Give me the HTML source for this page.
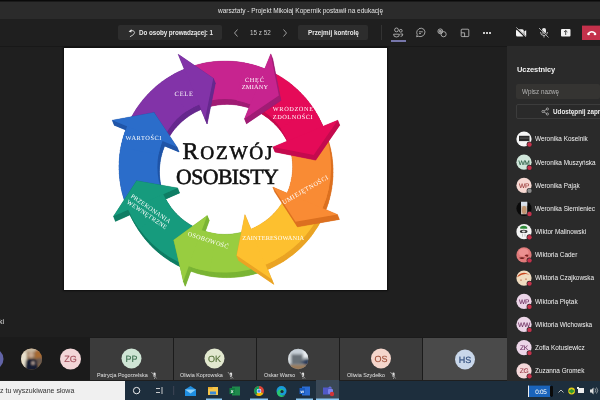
<!DOCTYPE html>
<html><head><meta charset="utf-8">
<style>
*{margin:0;padding:0;box-sizing:border-box}
html,body{width:600px;height:400px;overflow:hidden;background:#1f1f1f;font-family:"Liberation Sans",sans-serif;color:#fff}
.abs{position:absolute}
svg.abs{will-change:transform;text-rendering:geometricPrecision}
#topline{left:0;top:0;width:600px;height:1px;background:#0a0a0a}
#titlebar{left:0;top:1px;width:600px;height:17.5px;background:#2b2b2b;border-top:1px solid #1a1a1a}
#title{left:217.5px;top:7px;font-size:6.5px;color:#e4e4e4;white-space:nowrap}
#toolbar{left:0;top:18.5px;width:600px;height:27.5px;background:#1f1f1f}
#tbline{left:0;top:46px;width:507px;height:1px;background:#181818}
.btn{background:#2d2d2d;border-radius:2px}
.t{white-space:nowrap;will-change:transform}
#panel{left:507px;top:45.5px;width:93px;height:335px;background:#2a2a2a}
#strip{left:0;top:337px;width:507px;height:43px;background:#1b1b1b}
.tile{top:338px;height:42px;background:#393939}
.av{border-radius:50%;display:flex;align-items:center;justify-content:center;font-weight:bold}
#taskbar{left:0;top:380.5px;width:600px;height:19.5px;background:#1d2e3d}
</style></head><body>
<div class="abs" id="topline"></div>
<div class="abs" id="titlebar"></div>
<div class="abs t" id="title">warsztaty - Projekt Mikołaj Kopernik postawił na edukację</div>
<div class="abs" id="toolbar"></div>
<div class="abs" id="tbline"></div>

<!-- toolbar buttons -->
<div class="abs btn" style="left:118px;top:25px;width:104px;height:15px"></div>
<div class="abs t" style="left:139.3px;top:28.8px;font-size:6.3px;font-weight:bold;color:#e8e8e8;letter-spacing:-0.07px">Do osoby prowadzącej: 1</div>
<svg class="abs" style="left:126px;top:27px" width="11" height="11" viewBox="0 0 11 11"><path d="M5 3.4 Q8.6 3.2 8.6 5.6 Q8.6 7.6 4.3 9.6" stroke="#d8d8d8" stroke-width="0.9" fill="none" stroke-linecap="round"/><path d="M2.6 4.4 L5.6 2.2 L5.4 5.4 Z" fill="#e8e8e8"/></svg>
<svg class="abs" style="left:232px;top:28px" width="8" height="10" viewBox="0 0 8 10"><path d="M5.5 1.5 L2.5 5 L5.5 8.5" stroke="#bbb" stroke-width="0.8" fill="none"/></svg>
<div class="abs t" style="left:250px;top:29px;font-size:6.3px;color:#c8c8c8">15 z 52</div>
<svg class="abs" style="left:281px;top:28px" width="8" height="10" viewBox="0 0 8 10"><path d="M2.5 1.5 L5.5 5 L2.5 8.5" stroke="#bbb" stroke-width="0.8" fill="none"/></svg>
<div class="abs btn" style="left:298px;top:25px;width:70px;height:15px"></div>
<div class="abs t" style="left:307.7px;top:28.8px;font-size:6.3px;font-weight:bold;color:#e8e8e8">Przejmij kontrolę</div>
<div class="abs" style="left:381px;top:25px;width:1px;height:15px;background:#333"></div>

<!-- toolbar icons -->
<svg class="abs" style="left:385px;top:24px" width="120" height="20" viewBox="385 24 120 20">
 <g stroke="#c4c4c4" stroke-width="0.8" fill="none">
  <circle cx="396.5" cy="29.9" r="1.9"/><path d="M393.6 34.2 H399.4 Q399.6 37 396.5 37 Q393.4 37 393.6 34.2 Z"/>
  <circle cx="400.8" cy="30.8" r="1.4"/><path d="M400.4 34 H402.8 Q403 36.4 400.6 36.4"/>
  <path d="M416.6 36.8 L417.2 34.6 Q416.2 32.5 417.2 30.6 Q418.8 28 421.3 28.2 Q424.6 28.6 425 31.8 Q425.2 35 422 36.3 Q419.8 37 418.2 36.2 Z"/>
  <path d="M419 31.8 H422.8 M419 33.6 H421"/>
  <circle cx="440.3" cy="31.3" r="2.4"/><circle cx="443.6" cy="34.2" r="2.6"/>
  <rect x="461.2" y="29.2" width="7.6" height="7.4" rx="0.8"/><path d="M461.2 32.8 H464.6 V36.6"/>
 </g>
 <circle cx="440.3" cy="31.3" r="1.6" fill="#999"/>
 <rect x="391" y="40" width="15" height="2" fill="#7676aa"/>
 <g fill="#c8c8c8"><rect x="483" y="32" width="2" height="2"/><rect x="486" y="32" width="2" height="2"/><rect x="489" y="32" width="2" height="2"/></g>
</svg>
<svg class="abs" style="left:510px;top:22px" width="90" height="20" viewBox="510 22 90 20">
 <g fill="#f4f4f4">
  <rect x="516" y="29.2" width="7.8" height="7.4" rx="1.6"/>
  <path d="M524.3 31.2 L526.2 30.2 L526.2 36.4 L524.3 35.2 Z"/>
 </g>
 <path d="M515.8 27.6 L526.2 37.6" stroke="#1f1f1f" stroke-width="1.9"/>
 <path d="M516.3 27.4 L526 36.8" stroke="#e8e8e8" stroke-width="0.7"/>
 <g fill="#e8e8e8"><rect x="542" y="28" width="4" height="6" rx="2"/></g>
 <path d="M540.5 32 Q540.5 35.5 544 35.5 Q547.5 35.5 547.5 32 M544 35.5 V37.5" stroke="#ddd" stroke-width="0.8" fill="none"/>
 <path d="M539 28 L548.5 37.5" stroke="#1f1f1f" stroke-width="1.4"/>
 <path d="M539 28 L548.5 37.5" stroke="#ddd" stroke-width="0.7"/>
 <rect x="561" y="29" width="9.5" height="7.5" rx="1" fill="#f2f2f2"/>
 <path d="M565.7 35 V30.5 M564 32 L565.7 30.5 L567.4 32" stroke="#222" stroke-width="0.8" fill="none"/>
 <rect x="582" y="25.6" width="18" height="14.4" fill="#c4314b"/>
 <path d="M588.2 33.6 Q591.8 29.8 595.4 33.6" stroke="#fff" stroke-width="1.5" fill="none" stroke-linecap="round"/><ellipse cx="588.6" cy="34.2" rx="1.3" ry="1" fill="#fff"/><ellipse cx="595" cy="34.2" rx="1.3" ry="1" fill="#fff"/>
</svg>

<!-- slide -->
<div class="abs" style="left:64px;top:48px;width:323px;height:242px;background:#fff;box-shadow:0 0 1.5px 1px rgba(0,0,0,0.55)"></div>
<svg class="abs" style="left:64px;top:48px" width="323" height="242" viewBox="64 48 323 242">
<g fill="#66288e" stroke="#66288e" stroke-width="0.3"><path d="M129.3 130.8 L130.8 127.3 L132.5 123.9 L134.3 120.6 L136.2 117.3 L138.2 114.1 L140.3 110.9 L142.5 107.9 L144.9 104.9 L147.4 102.0 L149.9 99.2 L152.6 96.5 L155.3 93.9 L158.2 91.3 L161.1 88.9 L164.1 86.6 L167.2 84.4 L170.4 82.4 L173.7 80.4 L177.0 78.5 L180.4 76.8 L183.8 75.2 L187.3 73.7 L201.7 109.2 L199.4 110.2 L197.3 111.2 L195.1 112.3 L193.0 113.5 L190.9 114.8 L188.9 116.1 L186.9 117.5 L185.0 119.0 L183.1 120.5 L181.3 122.1 L179.5 123.8 L177.8 125.5 L176.2 127.3 L174.6 129.1 L173.1 131.0 L171.7 133.0 L170.4 135.0 L169.1 137.0 L167.9 139.1 L166.7 141.3 L165.7 143.4 L164.7 145.7 Z"/><path d="M127.3 125.8 L128.8 122.3 L130.8 127.3 L129.3 130.8 Z"/><path d="M128.8 122.3 L130.5 118.9 L132.5 123.9 L130.8 127.3 Z"/><path d="M130.5 118.9 L132.3 115.6 L134.3 120.6 L132.5 123.9 Z"/><path d="M132.3 115.6 L134.2 112.3 L136.2 117.3 L134.3 120.6 Z"/><path d="M134.2 112.3 L136.2 109.1 L138.2 114.1 L136.2 117.3 Z"/><path d="M136.2 109.1 L138.3 105.9 L140.3 110.9 L138.2 114.1 Z"/><path d="M138.3 105.9 L140.5 102.9 L142.5 107.9 L140.3 110.9 Z"/><path d="M140.5 102.9 L142.9 99.9 L144.9 104.9 L142.5 107.9 Z"/><path d="M142.9 99.9 L145.4 97.0 L147.4 102.0 L144.9 104.9 Z"/><path d="M145.4 97.0 L147.9 94.2 L149.9 99.2 L147.4 102.0 Z"/><path d="M147.9 94.2 L150.6 91.5 L152.6 96.5 L149.9 99.2 Z"/><path d="M150.6 91.5 L153.3 88.9 L155.3 93.9 L152.6 96.5 Z"/><path d="M153.3 88.9 L156.2 86.3 L158.2 91.3 L155.3 93.9 Z"/><path d="M156.2 86.3 L159.1 83.9 L161.1 88.9 L158.2 91.3 Z"/><path d="M159.1 83.9 L162.1 81.6 L164.1 86.6 L161.1 88.9 Z"/><path d="M162.1 81.6 L165.2 79.4 L167.2 84.4 L164.1 86.6 Z"/><path d="M165.2 79.4 L168.4 77.4 L170.4 82.4 L167.2 84.4 Z"/><path d="M168.4 77.4 L171.7 75.4 L173.7 80.4 L170.4 82.4 Z"/><path d="M171.7 75.4 L175.0 73.5 L177.0 78.5 L173.7 80.4 Z"/><path d="M175.0 73.5 L178.4 71.8 L180.4 76.8 L177.0 78.5 Z"/><path d="M178.4 71.8 L181.8 70.2 L183.8 75.2 L180.4 76.8 Z"/><path d="M181.8 70.2 L185.3 68.7 L187.3 73.7 L183.8 75.2 Z"/><path d="M185.3 68.7 L199.7 104.2 L201.7 109.2 L187.3 73.7 Z"/><path d="M199.7 104.2 L197.4 105.2 L199.4 110.2 L201.7 109.2 Z"/><path d="M197.4 105.2 L195.3 106.2 L197.3 111.2 L199.4 110.2 Z"/><path d="M195.3 106.2 L193.1 107.3 L195.1 112.3 L197.3 111.2 Z"/><path d="M193.1 107.3 L191.0 108.5 L193.0 113.5 L195.1 112.3 Z"/><path d="M191.0 108.5 L188.9 109.8 L190.9 114.8 L193.0 113.5 Z"/><path d="M188.9 109.8 L186.9 111.1 L188.9 116.1 L190.9 114.8 Z"/><path d="M186.9 111.1 L184.9 112.5 L186.9 117.5 L188.9 116.1 Z"/><path d="M184.9 112.5 L183.0 114.0 L185.0 119.0 L186.9 117.5 Z"/><path d="M183.0 114.0 L181.1 115.5 L183.1 120.5 L185.0 119.0 Z"/><path d="M181.1 115.5 L179.3 117.1 L181.3 122.1 L183.1 120.5 Z"/><path d="M179.3 117.1 L177.5 118.8 L179.5 123.8 L181.3 122.1 Z"/><path d="M177.5 118.8 L175.8 120.5 L177.8 125.5 L179.5 123.8 Z"/><path d="M175.8 120.5 L174.2 122.3 L176.2 127.3 L177.8 125.5 Z"/><path d="M174.2 122.3 L172.6 124.1 L174.6 129.1 L176.2 127.3 Z"/><path d="M172.6 124.1 L171.1 126.0 L173.1 131.0 L174.6 129.1 Z"/><path d="M171.1 126.0 L169.7 128.0 L171.7 133.0 L173.1 131.0 Z"/><path d="M169.7 128.0 L168.4 130.0 L170.4 135.0 L171.7 133.0 Z"/><path d="M168.4 130.0 L167.1 132.0 L169.1 137.0 L170.4 135.0 Z"/><path d="M167.1 132.0 L165.9 134.1 L167.9 139.1 L169.1 137.0 Z"/><path d="M165.9 134.1 L164.7 136.3 L166.7 141.3 L167.9 139.1 Z"/><path d="M164.7 136.3 L163.7 138.4 L165.7 143.4 L166.7 141.3 Z"/><path d="M163.7 138.4 L162.7 140.7 L164.7 145.7 L165.7 143.4 Z"/><path d="M162.7 140.7 L127.3 125.8 L129.3 130.8 L164.7 145.7 Z"/></g>
<g fill="#a01c74" stroke="#a01c74" stroke-width="0.3"><path d="M186.9 73.9 L190.5 72.5 L194.0 71.3 L197.6 70.2 L201.2 69.2 L204.9 68.3 L208.6 67.6 L212.3 67.0 L216.0 66.6 L219.8 66.3 L223.5 66.1 L227.3 66.0 L231.0 66.1 L234.8 66.3 L238.5 66.6 L242.3 67.1 L246.0 67.7 L249.7 68.5 L253.3 69.3 L256.9 70.3 L260.5 71.4 L264.1 72.7 L267.6 74.1 L252.9 109.5 L250.6 108.6 L248.4 107.8 L246.1 107.1 L243.8 106.4 L241.4 105.9 L239.1 105.4 L236.7 105.0 L234.4 104.7 L232.0 104.5 L229.6 104.4 L227.2 104.3 L224.8 104.4 L222.4 104.5 L220.0 104.7 L217.6 105.0 L215.3 105.4 L212.9 105.8 L210.6 106.4 L208.2 107.0 L206.0 107.7 L203.7 108.5 L201.5 109.3 Z"/><path d="M184.9 68.9 L188.5 67.5 L190.5 72.5 L186.9 73.9 Z"/><path d="M188.5 67.5 L192.0 66.3 L194.0 71.3 L190.5 72.5 Z"/><path d="M192.0 66.3 L195.6 65.2 L197.6 70.2 L194.0 71.3 Z"/><path d="M195.6 65.2 L199.2 64.2 L201.2 69.2 L197.6 70.2 Z"/><path d="M199.2 64.2 L202.9 63.3 L204.9 68.3 L201.2 69.2 Z"/><path d="M202.9 63.3 L206.6 62.6 L208.6 67.6 L204.9 68.3 Z"/><path d="M206.6 62.6 L210.3 62.0 L212.3 67.0 L208.6 67.6 Z"/><path d="M210.3 62.0 L214.0 61.6 L216.0 66.6 L212.3 67.0 Z"/><path d="M214.0 61.6 L217.8 61.3 L219.8 66.3 L216.0 66.6 Z"/><path d="M217.8 61.3 L221.5 61.1 L223.5 66.1 L219.8 66.3 Z"/><path d="M221.5 61.1 L225.3 61.0 L227.3 66.0 L223.5 66.1 Z"/><path d="M225.3 61.0 L229.0 61.1 L231.0 66.1 L227.3 66.0 Z"/><path d="M229.0 61.1 L232.8 61.3 L234.8 66.3 L231.0 66.1 Z"/><path d="M232.8 61.3 L236.5 61.6 L238.5 66.6 L234.8 66.3 Z"/><path d="M236.5 61.6 L240.3 62.1 L242.3 67.1 L238.5 66.6 Z"/><path d="M240.3 62.1 L244.0 62.7 L246.0 67.7 L242.3 67.1 Z"/><path d="M244.0 62.7 L247.7 63.5 L249.7 68.5 L246.0 67.7 Z"/><path d="M247.7 63.5 L251.3 64.3 L253.3 69.3 L249.7 68.5 Z"/><path d="M251.3 64.3 L254.9 65.3 L256.9 70.3 L253.3 69.3 Z"/><path d="M254.9 65.3 L258.5 66.4 L260.5 71.4 L256.9 70.3 Z"/><path d="M258.5 66.4 L262.1 67.7 L264.1 72.7 L260.5 71.4 Z"/><path d="M262.1 67.7 L265.6 69.1 L267.6 74.1 L264.1 72.7 Z"/><path d="M265.6 69.1 L250.9 104.5 L252.9 109.5 L267.6 74.1 Z"/><path d="M250.9 104.5 L248.6 103.6 L250.6 108.6 L252.9 109.5 Z"/><path d="M248.6 103.6 L246.4 102.8 L248.4 107.8 L250.6 108.6 Z"/><path d="M246.4 102.8 L244.1 102.1 L246.1 107.1 L248.4 107.8 Z"/><path d="M244.1 102.1 L241.8 101.4 L243.8 106.4 L246.1 107.1 Z"/><path d="M241.8 101.4 L239.4 100.9 L241.4 105.9 L243.8 106.4 Z"/><path d="M239.4 100.9 L237.1 100.4 L239.1 105.4 L241.4 105.9 Z"/><path d="M237.1 100.4 L234.7 100.0 L236.7 105.0 L239.1 105.4 Z"/><path d="M234.7 100.0 L232.4 99.7 L234.4 104.7 L236.7 105.0 Z"/><path d="M232.4 99.7 L230.0 99.5 L232.0 104.5 L234.4 104.7 Z"/><path d="M230.0 99.5 L227.6 99.4 L229.6 104.4 L232.0 104.5 Z"/><path d="M227.6 99.4 L225.2 99.3 L227.2 104.3 L229.6 104.4 Z"/><path d="M225.2 99.3 L222.8 99.4 L224.8 104.4 L227.2 104.3 Z"/><path d="M222.8 99.4 L220.4 99.5 L222.4 104.5 L224.8 104.4 Z"/><path d="M220.4 99.5 L218.0 99.7 L220.0 104.7 L222.4 104.5 Z"/><path d="M218.0 99.7 L215.6 100.0 L217.6 105.0 L220.0 104.7 Z"/><path d="M215.6 100.0 L213.3 100.4 L215.3 105.4 L217.6 105.0 Z"/><path d="M213.3 100.4 L210.9 100.8 L212.9 105.8 L215.3 105.4 Z"/><path d="M210.9 100.8 L208.6 101.4 L210.6 106.4 L212.9 105.8 Z"/><path d="M208.6 101.4 L206.2 102.0 L208.2 107.0 L210.6 106.4 Z"/><path d="M206.2 102.0 L204.0 102.7 L206.0 107.7 L208.2 107.0 Z"/><path d="M204.0 102.7 L201.7 103.5 L203.7 108.5 L206.0 107.7 Z"/><path d="M201.7 103.5 L199.5 104.3 L201.5 109.3 L203.7 108.5 Z"/><path d="M199.5 104.3 L184.9 68.9 L186.9 73.9 L201.5 109.3 Z"/></g>
<g fill="#c40a4e" stroke="#c40a4e" stroke-width="0.3"><path d="M267.2 73.9 L270.8 75.4 L274.2 77.1 L277.6 78.9 L281.0 80.8 L284.2 82.8 L287.4 84.9 L290.6 87.1 L293.6 89.5 L296.5 92.0 L299.4 94.5 L302.1 97.2 L304.8 100.0 L307.4 102.8 L309.8 105.8 L312.2 108.8 L314.4 111.9 L316.5 115.1 L318.5 118.4 L320.4 121.8 L322.1 125.2 L323.8 128.6 L325.3 132.2 L289.7 146.5 L288.7 144.3 L287.7 142.1 L286.6 139.9 L285.4 137.8 L284.1 135.7 L282.7 133.6 L281.3 131.6 L279.8 129.7 L278.3 127.8 L276.6 126.0 L274.9 124.2 L273.2 122.5 L271.3 120.9 L269.5 119.3 L267.5 117.8 L265.5 116.4 L263.5 115.0 L261.4 113.7 L259.3 112.5 L257.1 111.4 L254.9 110.3 L252.7 109.4 Z"/><path d="M265.2 68.9 L268.8 70.4 L270.8 75.4 L267.2 73.9 Z"/><path d="M268.8 70.4 L272.2 72.1 L274.2 77.1 L270.8 75.4 Z"/><path d="M272.2 72.1 L275.6 73.9 L277.6 78.9 L274.2 77.1 Z"/><path d="M275.6 73.9 L279.0 75.8 L281.0 80.8 L277.6 78.9 Z"/><path d="M279.0 75.8 L282.2 77.8 L284.2 82.8 L281.0 80.8 Z"/><path d="M282.2 77.8 L285.4 79.9 L287.4 84.9 L284.2 82.8 Z"/><path d="M285.4 79.9 L288.6 82.1 L290.6 87.1 L287.4 84.9 Z"/><path d="M288.6 82.1 L291.6 84.5 L293.6 89.5 L290.6 87.1 Z"/><path d="M291.6 84.5 L294.5 87.0 L296.5 92.0 L293.6 89.5 Z"/><path d="M294.5 87.0 L297.4 89.5 L299.4 94.5 L296.5 92.0 Z"/><path d="M297.4 89.5 L300.1 92.2 L302.1 97.2 L299.4 94.5 Z"/><path d="M300.1 92.2 L302.8 95.0 L304.8 100.0 L302.1 97.2 Z"/><path d="M302.8 95.0 L305.4 97.8 L307.4 102.8 L304.8 100.0 Z"/><path d="M305.4 97.8 L307.8 100.8 L309.8 105.8 L307.4 102.8 Z"/><path d="M307.8 100.8 L310.2 103.8 L312.2 108.8 L309.8 105.8 Z"/><path d="M310.2 103.8 L312.4 106.9 L314.4 111.9 L312.2 108.8 Z"/><path d="M312.4 106.9 L314.5 110.1 L316.5 115.1 L314.4 111.9 Z"/><path d="M314.5 110.1 L316.5 113.4 L318.5 118.4 L316.5 115.1 Z"/><path d="M316.5 113.4 L318.4 116.8 L320.4 121.8 L318.5 118.4 Z"/><path d="M318.4 116.8 L320.1 120.2 L322.1 125.2 L320.4 121.8 Z"/><path d="M320.1 120.2 L321.8 123.6 L323.8 128.6 L322.1 125.2 Z"/><path d="M321.8 123.6 L323.3 127.2 L325.3 132.2 L323.8 128.6 Z"/><path d="M323.3 127.2 L287.7 141.5 L289.7 146.5 L325.3 132.2 Z"/><path d="M287.7 141.5 L286.7 139.3 L288.7 144.3 L289.7 146.5 Z"/><path d="M286.7 139.3 L285.7 137.1 L287.7 142.1 L288.7 144.3 Z"/><path d="M285.7 137.1 L284.6 134.9 L286.6 139.9 L287.7 142.1 Z"/><path d="M284.6 134.9 L283.4 132.8 L285.4 137.8 L286.6 139.9 Z"/><path d="M283.4 132.8 L282.1 130.7 L284.1 135.7 L285.4 137.8 Z"/><path d="M282.1 130.7 L280.7 128.6 L282.7 133.6 L284.1 135.7 Z"/><path d="M280.7 128.6 L279.3 126.6 L281.3 131.6 L282.7 133.6 Z"/><path d="M279.3 126.6 L277.8 124.7 L279.8 129.7 L281.3 131.6 Z"/><path d="M277.8 124.7 L276.3 122.8 L278.3 127.8 L279.8 129.7 Z"/><path d="M276.3 122.8 L274.6 121.0 L276.6 126.0 L278.3 127.8 Z"/><path d="M274.6 121.0 L272.9 119.2 L274.9 124.2 L276.6 126.0 Z"/><path d="M272.9 119.2 L271.2 117.5 L273.2 122.5 L274.9 124.2 Z"/><path d="M271.2 117.5 L269.3 115.9 L271.3 120.9 L273.2 122.5 Z"/><path d="M269.3 115.9 L267.5 114.3 L269.5 119.3 L271.3 120.9 Z"/><path d="M267.5 114.3 L265.5 112.8 L267.5 117.8 L269.5 119.3 Z"/><path d="M265.5 112.8 L263.5 111.4 L265.5 116.4 L267.5 117.8 Z"/><path d="M263.5 111.4 L261.5 110.0 L263.5 115.0 L265.5 116.4 Z"/><path d="M261.5 110.0 L259.4 108.7 L261.4 113.7 L263.5 115.0 Z"/><path d="M259.4 108.7 L257.3 107.5 L259.3 112.5 L261.4 113.7 Z"/><path d="M257.3 107.5 L255.1 106.4 L257.1 111.4 L259.3 112.5 Z"/><path d="M255.1 106.4 L252.9 105.3 L254.9 110.3 L257.1 111.4 Z"/><path d="M252.9 105.3 L250.7 104.4 L252.7 109.4 L254.9 110.3 Z"/><path d="M250.7 104.4 L265.2 68.9 L267.2 73.9 L252.7 109.4 Z"/></g>
<g fill="#dc7020" stroke="#dc7020" stroke-width="0.3"><path d="M325.1 131.8 L326.5 135.4 L327.8 139.0 L328.9 142.7 L329.9 146.4 L330.8 150.1 L331.5 153.9 L332.1 157.7 L332.5 161.5 L332.8 165.3 L333.0 169.2 L333.0 173.0 L332.9 176.8 L332.6 180.7 L332.2 184.5 L331.7 188.3 L331.0 192.1 L330.2 195.8 L329.3 199.5 L328.2 203.2 L327.0 206.8 L325.7 210.4 L324.2 214.0 L289.0 198.7 L289.9 196.4 L290.8 194.1 L291.6 191.8 L292.2 189.5 L292.8 187.1 L293.3 184.7 L293.8 182.3 L294.1 179.9 L294.4 177.5 L294.5 175.0 L294.6 172.6 L294.6 170.1 L294.5 167.7 L294.3 165.2 L294.0 162.8 L293.6 160.4 L293.2 158.0 L292.6 155.6 L292.0 153.2 L291.3 150.9 L290.5 148.6 L289.6 146.3 Z"/><path d="M323.1 126.8 L324.5 130.4 L326.5 135.4 L325.1 131.8 Z"/><path d="M324.5 130.4 L325.8 134.0 L327.8 139.0 L326.5 135.4 Z"/><path d="M325.8 134.0 L326.9 137.7 L328.9 142.7 L327.8 139.0 Z"/><path d="M326.9 137.7 L327.9 141.4 L329.9 146.4 L328.9 142.7 Z"/><path d="M327.9 141.4 L328.8 145.1 L330.8 150.1 L329.9 146.4 Z"/><path d="M328.8 145.1 L329.5 148.9 L331.5 153.9 L330.8 150.1 Z"/><path d="M329.5 148.9 L330.1 152.7 L332.1 157.7 L331.5 153.9 Z"/><path d="M330.1 152.7 L330.5 156.5 L332.5 161.5 L332.1 157.7 Z"/><path d="M330.5 156.5 L330.8 160.3 L332.8 165.3 L332.5 161.5 Z"/><path d="M330.8 160.3 L331.0 164.2 L333.0 169.2 L332.8 165.3 Z"/><path d="M331.0 164.2 L331.0 168.0 L333.0 173.0 L333.0 169.2 Z"/><path d="M331.0 168.0 L330.9 171.8 L332.9 176.8 L333.0 173.0 Z"/><path d="M330.9 171.8 L330.6 175.7 L332.6 180.7 L332.9 176.8 Z"/><path d="M330.6 175.7 L330.2 179.5 L332.2 184.5 L332.6 180.7 Z"/><path d="M330.2 179.5 L329.7 183.3 L331.7 188.3 L332.2 184.5 Z"/><path d="M329.7 183.3 L329.0 187.1 L331.0 192.1 L331.7 188.3 Z"/><path d="M329.0 187.1 L328.2 190.8 L330.2 195.8 L331.0 192.1 Z"/><path d="M328.2 190.8 L327.3 194.5 L329.3 199.5 L330.2 195.8 Z"/><path d="M327.3 194.5 L326.2 198.2 L328.2 203.2 L329.3 199.5 Z"/><path d="M326.2 198.2 L325.0 201.8 L327.0 206.8 L328.2 203.2 Z"/><path d="M325.0 201.8 L323.7 205.4 L325.7 210.4 L327.0 206.8 Z"/><path d="M323.7 205.4 L322.2 209.0 L324.2 214.0 L325.7 210.4 Z"/><path d="M322.2 209.0 L287.0 193.7 L289.0 198.7 L324.2 214.0 Z"/><path d="M287.0 193.7 L287.9 191.4 L289.9 196.4 L289.0 198.7 Z"/><path d="M287.9 191.4 L288.8 189.1 L290.8 194.1 L289.9 196.4 Z"/><path d="M288.8 189.1 L289.6 186.8 L291.6 191.8 L290.8 194.1 Z"/><path d="M289.6 186.8 L290.2 184.5 L292.2 189.5 L291.6 191.8 Z"/><path d="M290.2 184.5 L290.8 182.1 L292.8 187.1 L292.2 189.5 Z"/><path d="M290.8 182.1 L291.3 179.7 L293.3 184.7 L292.8 187.1 Z"/><path d="M291.3 179.7 L291.8 177.3 L293.8 182.3 L293.3 184.7 Z"/><path d="M291.8 177.3 L292.1 174.9 L294.1 179.9 L293.8 182.3 Z"/><path d="M292.1 174.9 L292.4 172.5 L294.4 177.5 L294.1 179.9 Z"/><path d="M292.4 172.5 L292.5 170.0 L294.5 175.0 L294.4 177.5 Z"/><path d="M292.5 170.0 L292.6 167.6 L294.6 172.6 L294.5 175.0 Z"/><path d="M292.6 167.6 L292.6 165.1 L294.6 170.1 L294.6 172.6 Z"/><path d="M292.6 165.1 L292.5 162.7 L294.5 167.7 L294.6 170.1 Z"/><path d="M292.5 162.7 L292.3 160.2 L294.3 165.2 L294.5 167.7 Z"/><path d="M292.3 160.2 L292.0 157.8 L294.0 162.8 L294.3 165.2 Z"/><path d="M292.0 157.8 L291.6 155.4 L293.6 160.4 L294.0 162.8 Z"/><path d="M291.6 155.4 L291.2 153.0 L293.2 158.0 L293.6 160.4 Z"/><path d="M291.2 153.0 L290.6 150.6 L292.6 155.6 L293.2 158.0 Z"/><path d="M290.6 150.6 L290.0 148.2 L292.0 153.2 L292.6 155.6 Z"/><path d="M290.0 148.2 L289.3 145.9 L291.3 150.9 L292.0 153.2 Z"/><path d="M289.3 145.9 L288.5 143.6 L290.5 148.6 L291.3 150.9 Z"/><path d="M288.5 143.6 L287.6 141.3 L289.6 146.3 L290.5 148.6 Z"/><path d="M287.6 141.3 L323.1 126.8 L325.1 131.8 L289.6 146.3 Z"/></g>
<g fill="#eaa424" stroke="#eaa424" stroke-width="0.3"><path d="M324.4 213.6 L322.8 217.1 L321.1 220.4 L319.4 223.7 L317.5 227.0 L315.4 230.1 L313.3 233.2 L311.1 236.2 L308.7 239.2 L306.3 242.0 L303.7 244.8 L301.1 247.4 L298.4 250.0 L295.5 252.5 L292.6 254.9 L289.6 257.1 L286.6 259.3 L283.4 261.4 L280.2 263.3 L276.9 265.1 L273.6 266.8 L270.2 268.4 L266.7 269.9 L252.3 234.4 L254.5 233.4 L256.7 232.4 L258.8 231.3 L260.9 230.2 L263.0 228.9 L265.0 227.6 L266.9 226.2 L268.9 224.8 L270.7 223.3 L272.5 221.7 L274.3 220.0 L275.9 218.3 L277.6 216.6 L279.1 214.8 L280.6 212.9 L282.0 211.0 L283.4 209.0 L284.7 207.0 L285.9 204.9 L287.0 202.8 L288.1 200.7 L289.1 198.5 Z"/><path d="M322.4 208.6 L320.8 212.1 L322.8 217.1 L324.4 213.6 Z"/><path d="M320.8 212.1 L319.1 215.4 L321.1 220.4 L322.8 217.1 Z"/><path d="M319.1 215.4 L317.4 218.7 L319.4 223.7 L321.1 220.4 Z"/><path d="M317.4 218.7 L315.5 222.0 L317.5 227.0 L319.4 223.7 Z"/><path d="M315.5 222.0 L313.4 225.1 L315.4 230.1 L317.5 227.0 Z"/><path d="M313.4 225.1 L311.3 228.2 L313.3 233.2 L315.4 230.1 Z"/><path d="M311.3 228.2 L309.1 231.2 L311.1 236.2 L313.3 233.2 Z"/><path d="M309.1 231.2 L306.7 234.2 L308.7 239.2 L311.1 236.2 Z"/><path d="M306.7 234.2 L304.3 237.0 L306.3 242.0 L308.7 239.2 Z"/><path d="M304.3 237.0 L301.7 239.8 L303.7 244.8 L306.3 242.0 Z"/><path d="M301.7 239.8 L299.1 242.4 L301.1 247.4 L303.7 244.8 Z"/><path d="M299.1 242.4 L296.4 245.0 L298.4 250.0 L301.1 247.4 Z"/><path d="M296.4 245.0 L293.5 247.5 L295.5 252.5 L298.4 250.0 Z"/><path d="M293.5 247.5 L290.6 249.9 L292.6 254.9 L295.5 252.5 Z"/><path d="M290.6 249.9 L287.6 252.1 L289.6 257.1 L292.6 254.9 Z"/><path d="M287.6 252.1 L284.6 254.3 L286.6 259.3 L289.6 257.1 Z"/><path d="M284.6 254.3 L281.4 256.4 L283.4 261.4 L286.6 259.3 Z"/><path d="M281.4 256.4 L278.2 258.3 L280.2 263.3 L283.4 261.4 Z"/><path d="M278.2 258.3 L274.9 260.1 L276.9 265.1 L280.2 263.3 Z"/><path d="M274.9 260.1 L271.6 261.8 L273.6 266.8 L276.9 265.1 Z"/><path d="M271.6 261.8 L268.2 263.4 L270.2 268.4 L273.6 266.8 Z"/><path d="M268.2 263.4 L264.7 264.9 L266.7 269.9 L270.2 268.4 Z"/><path d="M264.7 264.9 L250.3 229.4 L252.3 234.4 L266.7 269.9 Z"/><path d="M250.3 229.4 L252.5 228.4 L254.5 233.4 L252.3 234.4 Z"/><path d="M252.5 228.4 L254.7 227.4 L256.7 232.4 L254.5 233.4 Z"/><path d="M254.7 227.4 L256.8 226.3 L258.8 231.3 L256.7 232.4 Z"/><path d="M256.8 226.3 L258.9 225.2 L260.9 230.2 L258.8 231.3 Z"/><path d="M258.9 225.2 L261.0 223.9 L263.0 228.9 L260.9 230.2 Z"/><path d="M261.0 223.9 L263.0 222.6 L265.0 227.6 L263.0 228.9 Z"/><path d="M263.0 222.6 L264.9 221.2 L266.9 226.2 L265.0 227.6 Z"/><path d="M264.9 221.2 L266.9 219.8 L268.9 224.8 L266.9 226.2 Z"/><path d="M266.9 219.8 L268.7 218.3 L270.7 223.3 L268.9 224.8 Z"/><path d="M268.7 218.3 L270.5 216.7 L272.5 221.7 L270.7 223.3 Z"/><path d="M270.5 216.7 L272.3 215.0 L274.3 220.0 L272.5 221.7 Z"/><path d="M272.3 215.0 L273.9 213.3 L275.9 218.3 L274.3 220.0 Z"/><path d="M273.9 213.3 L275.6 211.6 L277.6 216.6 L275.9 218.3 Z"/><path d="M275.6 211.6 L277.1 209.8 L279.1 214.8 L277.6 216.6 Z"/><path d="M277.1 209.8 L278.6 207.9 L280.6 212.9 L279.1 214.8 Z"/><path d="M278.6 207.9 L280.0 206.0 L282.0 211.0 L280.6 212.9 Z"/><path d="M280.0 206.0 L281.4 204.0 L283.4 209.0 L282.0 211.0 Z"/><path d="M281.4 204.0 L282.7 202.0 L284.7 207.0 L283.4 209.0 Z"/><path d="M282.7 202.0 L283.9 199.9 L285.9 204.9 L284.7 207.0 Z"/><path d="M283.9 199.9 L285.0 197.8 L287.0 202.8 L285.9 204.9 Z"/><path d="M285.0 197.8 L286.1 195.7 L288.1 200.7 L287.0 202.8 Z"/><path d="M286.1 195.7 L287.1 193.5 L289.1 198.5 L288.1 200.7 Z"/><path d="M287.1 193.5 L322.4 208.6 L324.4 213.6 L289.1 198.5 Z"/></g>
<g fill="#7ab434" stroke="#7ab434" stroke-width="0.3"><path d="M267.1 269.7 L263.5 271.1 L260.0 272.3 L256.4 273.4 L252.8 274.4 L249.1 275.3 L245.4 276.0 L241.7 276.6 L238.0 277.0 L234.2 277.3 L230.5 277.5 L226.7 277.6 L222.9 277.5 L219.2 277.3 L215.4 277.0 L211.7 276.5 L208.0 275.9 L204.3 275.1 L200.6 274.3 L197.0 273.3 L193.4 272.1 L189.9 270.9 L203.3 235.0 L205.6 235.8 L207.9 236.5 L210.2 237.1 L212.5 237.7 L214.9 238.2 L217.2 238.6 L219.6 238.9 L222.0 239.1 L224.4 239.2 L226.8 239.3 L229.2 239.2 L231.6 239.1 L234.0 238.9 L236.4 238.6 L238.7 238.2 L241.1 237.8 L243.4 237.2 L245.7 236.6 L248.0 235.9 L250.3 235.1 L252.5 234.3 Z"/><path d="M265.1 264.7 L261.5 266.1 L263.5 271.1 L267.1 269.7 Z"/><path d="M261.5 266.1 L258.0 267.3 L260.0 272.3 L263.5 271.1 Z"/><path d="M258.0 267.3 L254.4 268.4 L256.4 273.4 L260.0 272.3 Z"/><path d="M254.4 268.4 L250.8 269.4 L252.8 274.4 L256.4 273.4 Z"/><path d="M250.8 269.4 L247.1 270.3 L249.1 275.3 L252.8 274.4 Z"/><path d="M247.1 270.3 L243.4 271.0 L245.4 276.0 L249.1 275.3 Z"/><path d="M243.4 271.0 L239.7 271.6 L241.7 276.6 L245.4 276.0 Z"/><path d="M239.7 271.6 L236.0 272.0 L238.0 277.0 L241.7 276.6 Z"/><path d="M236.0 272.0 L232.2 272.3 L234.2 277.3 L238.0 277.0 Z"/><path d="M232.2 272.3 L228.5 272.5 L230.5 277.5 L234.2 277.3 Z"/><path d="M228.5 272.5 L224.7 272.6 L226.7 277.6 L230.5 277.5 Z"/><path d="M224.7 272.6 L220.9 272.5 L222.9 277.5 L226.7 277.6 Z"/><path d="M220.9 272.5 L217.2 272.3 L219.2 277.3 L222.9 277.5 Z"/><path d="M217.2 272.3 L213.4 272.0 L215.4 277.0 L219.2 277.3 Z"/><path d="M213.4 272.0 L209.7 271.5 L211.7 276.5 L215.4 277.0 Z"/><path d="M209.7 271.5 L206.0 270.9 L208.0 275.9 L211.7 276.5 Z"/><path d="M206.0 270.9 L202.3 270.1 L204.3 275.1 L208.0 275.9 Z"/><path d="M202.3 270.1 L198.6 269.3 L200.6 274.3 L204.3 275.1 Z"/><path d="M198.6 269.3 L195.0 268.3 L197.0 273.3 L200.6 274.3 Z"/><path d="M195.0 268.3 L191.4 267.1 L193.4 272.1 L197.0 273.3 Z"/><path d="M191.4 267.1 L187.9 265.9 L189.9 270.9 L193.4 272.1 Z"/><path d="M187.9 265.9 L201.3 230.0 L203.3 235.0 L189.9 270.9 Z"/><path d="M201.3 230.0 L203.6 230.8 L205.6 235.8 L203.3 235.0 Z"/><path d="M203.6 230.8 L205.9 231.5 L207.9 236.5 L205.6 235.8 Z"/><path d="M205.9 231.5 L208.2 232.1 L210.2 237.1 L207.9 236.5 Z"/><path d="M208.2 232.1 L210.5 232.7 L212.5 237.7 L210.2 237.1 Z"/><path d="M210.5 232.7 L212.9 233.2 L214.9 238.2 L212.5 237.7 Z"/><path d="M212.9 233.2 L215.2 233.6 L217.2 238.6 L214.9 238.2 Z"/><path d="M215.2 233.6 L217.6 233.9 L219.6 238.9 L217.2 238.6 Z"/><path d="M217.6 233.9 L220.0 234.1 L222.0 239.1 L219.6 238.9 Z"/><path d="M220.0 234.1 L222.4 234.2 L224.4 239.2 L222.0 239.1 Z"/><path d="M222.4 234.2 L224.8 234.3 L226.8 239.3 L224.4 239.2 Z"/><path d="M224.8 234.3 L227.2 234.2 L229.2 239.2 L226.8 239.3 Z"/><path d="M227.2 234.2 L229.6 234.1 L231.6 239.1 L229.2 239.2 Z"/><path d="M229.6 234.1 L232.0 233.9 L234.0 238.9 L231.6 239.1 Z"/><path d="M232.0 233.9 L234.4 233.6 L236.4 238.6 L234.0 238.9 Z"/><path d="M234.4 233.6 L236.7 233.2 L238.7 238.2 L236.4 238.6 Z"/><path d="M236.7 233.2 L239.1 232.8 L241.1 237.8 L238.7 238.2 Z"/><path d="M239.1 232.8 L241.4 232.2 L243.4 237.2 L241.1 237.8 Z"/><path d="M241.4 232.2 L243.7 231.6 L245.7 236.6 L243.4 237.2 Z"/><path d="M243.7 231.6 L246.0 230.9 L248.0 235.9 L245.7 236.6 Z"/><path d="M246.0 230.9 L248.3 230.1 L250.3 235.1 L248.0 235.9 Z"/><path d="M248.3 230.1 L250.5 229.3 L252.5 234.3 L250.3 235.1 Z"/><path d="M250.5 229.3 L265.1 264.7 L267.1 269.7 L252.5 234.3 Z"/></g>
<g fill="#0f7d64" stroke="#0f7d64" stroke-width="0.3"><path d="M190.2 271.0 L186.8 269.7 L183.4 268.2 L180.0 266.6 L176.7 264.9 L173.5 263.1 L170.3 261.2 L167.2 259.1 L164.1 257.0 L161.2 254.7 L158.3 252.4 L155.5 249.9 L152.8 247.4 L150.2 244.7 L147.7 242.0 L145.3 239.2 L143.0 236.3 L140.8 233.3 L138.7 230.3 L136.7 227.1 L134.8 223.9 L133.0 220.7 L131.3 217.4 L129.8 214.0 L165.0 198.7 L166.0 200.9 L167.0 203.0 L168.2 205.0 L169.4 207.1 L170.7 209.1 L172.0 211.0 L173.4 212.9 L174.9 214.8 L176.4 216.6 L178.0 218.3 L179.7 220.0 L181.4 221.6 L183.2 223.2 L185.0 224.7 L186.9 226.1 L188.8 227.5 L190.8 228.8 L192.8 230.0 L194.9 231.2 L197.0 232.3 L199.2 233.3 L201.3 234.2 L203.5 235.1 Z"/><path d="M188.2 266.0 L184.8 264.7 L186.8 269.7 L190.2 271.0 Z"/><path d="M184.8 264.7 L181.4 263.2 L183.4 268.2 L186.8 269.7 Z"/><path d="M181.4 263.2 L178.0 261.6 L180.0 266.6 L183.4 268.2 Z"/><path d="M178.0 261.6 L174.7 259.9 L176.7 264.9 L180.0 266.6 Z"/><path d="M174.7 259.9 L171.5 258.1 L173.5 263.1 L176.7 264.9 Z"/><path d="M171.5 258.1 L168.3 256.2 L170.3 261.2 L173.5 263.1 Z"/><path d="M168.3 256.2 L165.2 254.1 L167.2 259.1 L170.3 261.2 Z"/><path d="M165.2 254.1 L162.1 252.0 L164.1 257.0 L167.2 259.1 Z"/><path d="M162.1 252.0 L159.2 249.7 L161.2 254.7 L164.1 257.0 Z"/><path d="M159.2 249.7 L156.3 247.4 L158.3 252.4 L161.2 254.7 Z"/><path d="M156.3 247.4 L153.5 244.9 L155.5 249.9 L158.3 252.4 Z"/><path d="M153.5 244.9 L150.8 242.4 L152.8 247.4 L155.5 249.9 Z"/><path d="M150.8 242.4 L148.2 239.7 L150.2 244.7 L152.8 247.4 Z"/><path d="M148.2 239.7 L145.7 237.0 L147.7 242.0 L150.2 244.7 Z"/><path d="M145.7 237.0 L143.3 234.2 L145.3 239.2 L147.7 242.0 Z"/><path d="M143.3 234.2 L141.0 231.3 L143.0 236.3 L145.3 239.2 Z"/><path d="M141.0 231.3 L138.8 228.3 L140.8 233.3 L143.0 236.3 Z"/><path d="M138.8 228.3 L136.7 225.3 L138.7 230.3 L140.8 233.3 Z"/><path d="M136.7 225.3 L134.7 222.1 L136.7 227.1 L138.7 230.3 Z"/><path d="M134.7 222.1 L132.8 218.9 L134.8 223.9 L136.7 227.1 Z"/><path d="M132.8 218.9 L131.0 215.7 L133.0 220.7 L134.8 223.9 Z"/><path d="M131.0 215.7 L129.3 212.4 L131.3 217.4 L133.0 220.7 Z"/><path d="M129.3 212.4 L127.8 209.0 L129.8 214.0 L131.3 217.4 Z"/><path d="M127.8 209.0 L163.0 193.7 L165.0 198.7 L129.8 214.0 Z"/><path d="M163.0 193.7 L164.0 195.9 L166.0 200.9 L165.0 198.7 Z"/><path d="M164.0 195.9 L165.0 198.0 L167.0 203.0 L166.0 200.9 Z"/><path d="M165.0 198.0 L166.2 200.0 L168.2 205.0 L167.0 203.0 Z"/><path d="M166.2 200.0 L167.4 202.1 L169.4 207.1 L168.2 205.0 Z"/><path d="M167.4 202.1 L168.7 204.1 L170.7 209.1 L169.4 207.1 Z"/><path d="M168.7 204.1 L170.0 206.0 L172.0 211.0 L170.7 209.1 Z"/><path d="M170.0 206.0 L171.4 207.9 L173.4 212.9 L172.0 211.0 Z"/><path d="M171.4 207.9 L172.9 209.8 L174.9 214.8 L173.4 212.9 Z"/><path d="M172.9 209.8 L174.4 211.6 L176.4 216.6 L174.9 214.8 Z"/><path d="M174.4 211.6 L176.0 213.3 L178.0 218.3 L176.4 216.6 Z"/><path d="M176.0 213.3 L177.7 215.0 L179.7 220.0 L178.0 218.3 Z"/><path d="M177.7 215.0 L179.4 216.6 L181.4 221.6 L179.7 220.0 Z"/><path d="M179.4 216.6 L181.2 218.2 L183.2 223.2 L181.4 221.6 Z"/><path d="M181.2 218.2 L183.0 219.7 L185.0 224.7 L183.2 223.2 Z"/><path d="M183.0 219.7 L184.9 221.1 L186.9 226.1 L185.0 224.7 Z"/><path d="M184.9 221.1 L186.8 222.5 L188.8 227.5 L186.9 226.1 Z"/><path d="M186.8 222.5 L188.8 223.8 L190.8 228.8 L188.8 227.5 Z"/><path d="M188.8 223.8 L190.8 225.0 L192.8 230.0 L190.8 228.8 Z"/><path d="M190.8 225.0 L192.9 226.2 L194.9 231.2 L192.8 230.0 Z"/><path d="M192.9 226.2 L195.0 227.3 L197.0 232.3 L194.9 231.2 Z"/><path d="M195.0 227.3 L197.2 228.3 L199.2 233.3 L197.0 232.3 Z"/><path d="M197.2 228.3 L199.3 229.2 L201.3 234.2 L199.2 233.3 Z"/><path d="M199.3 229.2 L201.5 230.1 L203.5 235.1 L201.3 234.2 Z"/><path d="M201.5 230.1 L188.2 266.0 L190.2 271.0 L203.5 235.1 Z"/></g>
<g fill="#2055a8" stroke="#2055a8" stroke-width="0.3"><path d="M129.9 214.3 L128.5 210.9 L127.2 207.4 L126.0 203.8 L124.9 200.2 L123.9 196.6 L123.1 192.9 L122.4 189.2 L121.9 185.5 L121.5 181.8 L121.2 178.1 L121.0 174.3 L121.0 170.6 L121.1 166.8 L121.4 163.1 L121.7 159.4 L122.2 155.6 L122.9 151.9 L123.7 148.3 L124.6 144.6 L125.6 141.0 L126.7 137.5 L128.0 133.9 L129.4 130.5 L164.8 145.4 L163.9 147.7 L163.1 149.9 L162.3 152.2 L161.7 154.5 L161.1 156.8 L160.6 159.1 L160.2 161.5 L159.9 163.9 L159.6 166.2 L159.5 168.6 L159.4 171.0 L159.4 173.4 L159.5 175.8 L159.7 178.2 L160.0 180.6 L160.3 182.9 L160.8 185.3 L161.3 187.6 L161.9 189.9 L162.6 192.2 L163.3 194.5 L164.2 196.7 L165.1 198.9 Z"/><path d="M127.9 209.3 L126.5 205.9 L128.5 210.9 L129.9 214.3 Z"/><path d="M126.5 205.9 L125.2 202.4 L127.2 207.4 L128.5 210.9 Z"/><path d="M125.2 202.4 L124.0 198.8 L126.0 203.8 L127.2 207.4 Z"/><path d="M124.0 198.8 L122.9 195.2 L124.9 200.2 L126.0 203.8 Z"/><path d="M122.9 195.2 L121.9 191.6 L123.9 196.6 L124.9 200.2 Z"/><path d="M121.9 191.6 L121.1 187.9 L123.1 192.9 L123.9 196.6 Z"/><path d="M121.1 187.9 L120.4 184.2 L122.4 189.2 L123.1 192.9 Z"/><path d="M120.4 184.2 L119.9 180.5 L121.9 185.5 L122.4 189.2 Z"/><path d="M119.9 180.5 L119.5 176.8 L121.5 181.8 L121.9 185.5 Z"/><path d="M119.5 176.8 L119.2 173.1 L121.2 178.1 L121.5 181.8 Z"/><path d="M119.2 173.1 L119.0 169.3 L121.0 174.3 L121.2 178.1 Z"/><path d="M119.0 169.3 L119.0 165.6 L121.0 170.6 L121.0 174.3 Z"/><path d="M119.0 165.6 L119.1 161.8 L121.1 166.8 L121.0 170.6 Z"/><path d="M119.1 161.8 L119.4 158.1 L121.4 163.1 L121.1 166.8 Z"/><path d="M119.4 158.1 L119.7 154.4 L121.7 159.4 L121.4 163.1 Z"/><path d="M119.7 154.4 L120.2 150.6 L122.2 155.6 L121.7 159.4 Z"/><path d="M120.2 150.6 L120.9 146.9 L122.9 151.9 L122.2 155.6 Z"/><path d="M120.9 146.9 L121.7 143.3 L123.7 148.3 L122.9 151.9 Z"/><path d="M121.7 143.3 L122.6 139.6 L124.6 144.6 L123.7 148.3 Z"/><path d="M122.6 139.6 L123.6 136.0 L125.6 141.0 L124.6 144.6 Z"/><path d="M123.6 136.0 L124.7 132.5 L126.7 137.5 L125.6 141.0 Z"/><path d="M124.7 132.5 L126.0 128.9 L128.0 133.9 L126.7 137.5 Z"/><path d="M126.0 128.9 L127.4 125.5 L129.4 130.5 L128.0 133.9 Z"/><path d="M127.4 125.5 L162.8 140.4 L164.8 145.4 L129.4 130.5 Z"/><path d="M162.8 140.4 L161.9 142.7 L163.9 147.7 L164.8 145.4 Z"/><path d="M161.9 142.7 L161.1 144.9 L163.1 149.9 L163.9 147.7 Z"/><path d="M161.1 144.9 L160.3 147.2 L162.3 152.2 L163.1 149.9 Z"/><path d="M160.3 147.2 L159.7 149.5 L161.7 154.5 L162.3 152.2 Z"/><path d="M159.7 149.5 L159.1 151.8 L161.1 156.8 L161.7 154.5 Z"/><path d="M159.1 151.8 L158.6 154.1 L160.6 159.1 L161.1 156.8 Z"/><path d="M158.6 154.1 L158.2 156.5 L160.2 161.5 L160.6 159.1 Z"/><path d="M158.2 156.5 L157.9 158.9 L159.9 163.9 L160.2 161.5 Z"/><path d="M157.9 158.9 L157.6 161.2 L159.6 166.2 L159.9 163.9 Z"/><path d="M157.6 161.2 L157.5 163.6 L159.5 168.6 L159.6 166.2 Z"/><path d="M157.5 163.6 L157.4 166.0 L159.4 171.0 L159.5 168.6 Z"/><path d="M157.4 166.0 L157.4 168.4 L159.4 173.4 L159.4 171.0 Z"/><path d="M157.4 168.4 L157.5 170.8 L159.5 175.8 L159.4 173.4 Z"/><path d="M157.5 170.8 L157.7 173.2 L159.7 178.2 L159.5 175.8 Z"/><path d="M157.7 173.2 L158.0 175.6 L160.0 180.6 L159.7 178.2 Z"/><path d="M158.0 175.6 L158.3 177.9 L160.3 182.9 L160.0 180.6 Z"/><path d="M158.3 177.9 L158.8 180.3 L160.8 185.3 L160.3 182.9 Z"/><path d="M158.8 180.3 L159.3 182.6 L161.3 187.6 L160.8 185.3 Z"/><path d="M159.3 182.6 L159.9 184.9 L161.9 189.9 L161.3 187.6 Z"/><path d="M159.9 184.9 L160.6 187.2 L162.6 192.2 L161.9 189.9 Z"/><path d="M160.6 187.2 L161.3 189.5 L163.3 194.5 L162.6 192.2 Z"/><path d="M161.3 189.5 L162.2 191.7 L164.2 196.7 L163.3 194.5 Z"/><path d="M162.2 191.7 L163.1 193.9 L165.1 198.9 L164.2 196.7 Z"/><path d="M163.1 193.9 L127.9 209.3 L129.9 214.3 L165.1 198.9 Z"/></g>
<path d="M127.3 125.8 A106 105 0 0 1 185.3 68.7 L199.7 104.2 A67 67 0 0 0 162.7 140.7 Z" fill="#8233a8"/>
<path d="M184.9 68.9 A106 105 0 0 1 265.6 69.1 L250.9 104.5 A67 67 0 0 0 199.5 104.3 Z" fill="#c7248f"/>
<path d="M265.2 68.9 A106 105 0 0 1 323.3 127.2 L287.7 141.5 A67 67 0 0 0 250.7 104.4 Z" fill="#e50a58"/>
<path d="M323.1 126.8 A106 105 0 0 1 322.2 209.0 L287.0 193.7 A67 67 0 0 0 287.6 141.3 Z" fill="#f98b34"/>
<path d="M322.4 208.6 A106 105 0 0 1 264.7 264.9 L250.3 229.4 A67 67 0 0 0 287.1 193.5 Z" fill="#fdc02f"/>
<path d="M265.1 264.7 A106 105 0 0 1 187.9 265.9 L201.3 230.0 A67 67 0 0 0 250.5 229.3 Z" fill="#98cd40"/>
<path d="M188.2 266.0 A106 105 0 0 1 127.8 209.0 L163.0 193.7 A67 67 0 0 0 201.5 230.1 Z" fill="#169b7d"/>
<path d="M127.9 209.3 A106 105 0 0 1 127.4 125.5 L162.8 140.4 A67 67 0 0 0 163.1 193.9 Z" fill="#2b6dca"/>
<g fill="#66288e" stroke="#66288e" stroke-width="0.3"><path d="M180.3 59.3 L215.3 83.2 L207.1 123.9 Z"/><path d="M178.3 54.3 L213.3 78.2 L215.3 83.2 L180.3 59.3 Z"/><path d="M213.3 78.2 L205.1 118.9 L207.1 123.9 L215.3 83.2 Z"/><path d="M205.1 118.9 L178.3 54.3 L180.3 59.3 L207.1 123.9 Z"/></g><path d="M165.0 79.6 A106 105 0 0 1 185.3 68.7 L199.7 104.2 A67 67 0 0 0 186.7 111.2 Z" fill="#8233a8"/><path d="M178.3 54.3 L213.3 78.2 L205.1 118.9 Z" fill="#8233a8"/>
<g fill="#a01c74" stroke="#a01c74" stroke-width="0.3"><path d="M272.7 58.9 L280.9 100.5 L246.5 123.7 Z"/><path d="M270.7 53.9 L278.9 95.5 L280.9 100.5 L272.7 58.9 Z"/><path d="M278.9 95.5 L244.5 118.7 L246.5 123.7 L280.9 100.5 Z"/><path d="M244.5 118.7 L270.7 53.9 L272.7 58.9 L246.5 123.7 Z"/></g><path d="M243.4 62.6 A106 105 0 0 1 265.6 69.1 L250.9 104.5 A67 67 0 0 0 236.7 100.4 Z" fill="#c7248f"/><path d="M270.7 53.9 L278.9 95.5 L244.5 118.7 Z" fill="#c7248f"/>
<g fill="#c40a4e" stroke="#c40a4e" stroke-width="0.3"><path d="M339.7 125.2 L315.7 160.1 L275.0 151.9 Z"/><path d="M337.7 120.2 L313.7 155.1 L315.7 160.1 L339.7 125.2 Z"/><path d="M313.7 155.1 L273.0 146.9 L275.0 151.9 L315.7 160.1 Z"/><path d="M273.0 146.9 L337.7 120.2 L339.7 125.2 L275.0 151.9 Z"/></g><path d="M312.4 106.9 A106 105 0 0 1 323.3 127.2 L287.7 141.5 A67 67 0 0 0 280.7 128.6 Z" fill="#e50a58"/><path d="M337.7 120.2 L313.7 155.1 L273.0 146.9 Z" fill="#e50a58"/>
<g fill="#dc7020" stroke="#dc7020" stroke-width="0.3"><path d="M339.3 219.4 L297.5 226.8 L274.9 192.1 Z"/><path d="M337.3 214.4 L295.5 221.8 L297.5 226.8 L339.3 219.4 Z"/><path d="M295.5 221.8 L272.9 187.1 L274.9 192.1 L297.5 226.8 Z"/><path d="M272.9 187.1 L337.3 214.4 L339.3 219.4 L274.9 192.1 Z"/></g><path d="M329.1 187.0 A106 105 0 0 1 322.2 209.0 L287.0 193.7 A67 67 0 0 0 291.4 179.7 Z" fill="#f98b34"/><path d="M337.3 214.4 L295.5 221.8 L272.9 187.1 Z" fill="#f98b34"/>
<g fill="#eaa424" stroke="#eaa424" stroke-width="0.3"><path d="M273.7 284.3 L238.7 260.4 L246.9 219.7 Z"/><path d="M271.7 279.3 L236.7 255.4 L238.7 260.4 L273.7 284.3 Z"/><path d="M236.7 255.4 L244.9 214.7 L246.9 219.7 L238.7 260.4 Z"/><path d="M244.9 214.7 L271.7 279.3 L273.7 284.3 L246.9 219.7 Z"/></g><path d="M285.0 254.0 A106 105 0 0 1 264.7 264.9 L250.3 229.4 A67 67 0 0 0 263.3 222.4 Z" fill="#fdc02f"/><path d="M271.7 279.3 L236.7 255.4 L244.9 214.7 Z" fill="#fdc02f"/>
<g fill="#7ab434" stroke="#7ab434" stroke-width="0.3"><path d="M185.3 286.2 L175.7 245.0 L209.2 220.6 Z"/><path d="M183.3 281.2 L173.7 240.0 L175.7 245.0 L185.3 286.2 Z"/><path d="M173.7 240.0 L207.2 215.6 L209.2 220.6 L175.7 245.0 Z"/><path d="M207.2 215.6 L183.3 281.2 L185.3 286.2 L209.2 220.6 Z"/></g><path d="M210.2 271.6 A106 105 0 0 1 187.9 265.9 L201.3 230.0 A67 67 0 0 0 215.6 233.6 Z" fill="#98cd40"/><path d="M183.3 281.2 L173.7 240.0 L207.2 215.6 Z" fill="#98cd40"/>
<g fill="#0f7d64" stroke="#0f7d64" stroke-width="0.3"><path d="M115.5 221.3 L138.6 185.8 L179.5 192.9 Z"/><path d="M113.5 216.3 L136.6 180.8 L138.6 185.8 L115.5 221.3 Z"/><path d="M136.6 180.8 L177.5 187.9 L179.5 192.9 L138.6 185.8 Z"/><path d="M177.5 187.9 L113.5 216.3 L115.5 221.3 L179.5 192.9 Z"/></g><path d="M139.2 229.0 A106 105 0 0 1 127.8 209.0 L163.0 193.7 A67 67 0 0 0 170.3 206.5 Z" fill="#169b7d"/><path d="M113.5 216.3 L136.6 180.8 L177.5 187.9 Z" fill="#169b7d"/>
<g fill="#2055a8" stroke="#2055a8" stroke-width="0.3"><path d="M114.3 125.2 L156.0 117.4 L179.0 151.9 Z"/><path d="M112.3 120.2 L154.0 112.4 L156.0 117.4 L114.3 125.2 Z"/><path d="M154.0 112.4 L177.0 146.9 L179.0 151.9 L156.0 117.4 Z"/><path d="M177.0 146.9 L112.3 120.2 L114.3 125.2 L179.0 151.9 Z"/></g><path d="M120.8 147.5 A106 105 0 0 1 127.4 125.5 L162.8 140.4 A67 67 0 0 0 158.5 154.5 Z" fill="#2b6dca"/><path d="M112.3 120.2 L154.0 112.4 L177.0 146.9 Z" fill="#2b6dca"/>
<g font-family="Liberation Serif" fill="#111" >
<text x="182.6" y="158.8" font-size="24" letter-spacing="1.7" stroke="#111" stroke-width="0.6"><tspan>R</tspan><tspan font-size="19.3">OZWÓJ</tspan></text>
<text x="176" y="183.7" font-size="21.7" letter-spacing="-0.5" stroke="#111" stroke-width="0.6">OSOBISTY</text>
</g>
<g font-family="Liberation Serif" fill="#fff" stroke="#fff" stroke-width="0" text-anchor="middle">
<text x="183.8" y="95.60" font-size="6.50" letter-spacing="0.70" transform="rotate(0.0 183.8 95.6) translate(0.35 0)">CELE</text>
<text x="254.4" y="82.40" font-size="6.30" letter-spacing="0.70" transform="rotate(0.0 254.4 82.4) translate(0.35 0)">CHĘĆ</text>
<text x="254.9" y="89.10" font-size="6.30" letter-spacing="0.20" transform="rotate(0.0 254.9 89.1) translate(0.10 0)">ZMIANY</text>
<text x="292.9" y="111.40" font-size="6.30" letter-spacing="0.60" transform="rotate(0.0 292.9 111.4) translate(0.30 0)">WRODZONE</text>
<text x="292.7" y="118.90" font-size="6.30" letter-spacing="0.50" transform="rotate(0.0 292.7 118.9) translate(0.25 0)">ZDOLNOŚCI</text>
<text x="306.2" y="191.60" font-size="6.30" letter-spacing="0.62" transform="rotate(-30.0 306.2 191.6) translate(0.31 0)">UMIEJĘTNOŚCI</text>
<text x="273.1" y="239.60" font-size="6.30" letter-spacing="0.15" transform="rotate(0.0 273.1 239.6) translate(0.07 0)">ZAINTERESOWANIA</text>
<text x="207.5" y="242.20" font-size="6.30" letter-spacing="0.40" transform="rotate(18.3 207.5 242.2) translate(0.20 0)">OSOBOWOŚĆ</text>
<text x="149.6" y="210.40" font-size="6.30" letter-spacing="0.20" transform="rotate(34.3 149.6 210.4) translate(0.10 0)">PRZEKONANIA</text>
<text x="145.8" y="216.20" font-size="6.30" letter-spacing="0.30" transform="rotate(34.3 145.8 216.2) translate(0.15 0)">WEWNĘTRZNE</text>
<text x="143.5" y="140.30" font-size="6.30" letter-spacing="0.60" transform="rotate(0.0 143.5 140.3) translate(0.30 0)">WARTOŚCI</text>
</g>
</svg>

<!-- right panel -->
<div class="abs" id="panel"></div>
<div class="abs t" style="left:516.5px;top:64.6px;font-size:7.5px;font-weight:bold;color:#f0f0f0;letter-spacing:-0.1px">Uczestnicy</div>
<div class="abs" style="left:516.4px;top:84.2px;width:84px;height:15.2px;background:#353432;border-radius:2px"></div>
<div class="abs t" style="left:522px;top:88.4px;font-size:6.3px;color:#b4b4b4">Wpisz nazwę</div>
<div class="abs" style="left:516.4px;top:104.1px;width:90px;height:14.5px;border:1px solid #3c3c3c;border-radius:2px"></div>
<svg class="abs" style="left:540.5px;top:107px" width="9" height="9" viewBox="0 0 9 9"><g stroke="#d8d8d8" stroke-width="0.6" fill="none"><circle cx="2" cy="4.5" r="1.1"/><circle cx="6.4" cy="2" r="1.1"/><circle cx="6.4" cy="7" r="1.1"/><path d="M3 4 L5.4 2.5 M3 5 L5.4 6.5"/></g></svg>
<div class="abs t" style="left:553px;top:107.5px;font-size:6.3px;font-weight:bold;color:#eee">Udostępnij zaproszenie</div>
<svg class="abs" style="left:507px;top:120px" width="93" height="260" viewBox="507 120 93 260">
<circle cx="524.0" cy="139.0" r="7.6" fill="#f6f6f6"/>
<rect x="519.0" y="135.8" width="10.5" height="5.3" fill="#2a2a2a"/>
<rect x="519.8" y="137.4" width="9" height="1.5" fill="#4a4a4a"/>
<circle cx="529.5" cy="144.5" r="2.9" fill="#292929"/>
<circle cx="529.5" cy="144.5" r="2.2" fill="#c4314b"/>
<circle cx="524.0" cy="162.2" r="7.6" fill="#d0e6da"/>
<text x="524.0" y="164.6" font-family="Liberation Sans" font-size="6.6" fill="#285a40" stroke="#285a40" stroke-width="0.1" text-anchor="middle" letter-spacing="-0.3">WM</text>
<circle cx="529.5" cy="167.7" r="2.9" fill="#292929"/>
<circle cx="529.5" cy="167.7" r="2.2" fill="#c4314b"/>
<circle cx="524.0" cy="185.4" r="7.6" fill="#f6d8d2"/>
<text x="524.0" y="187.8" font-family="Liberation Sans" font-size="6.6" fill="#9a3a38" stroke="#9a3a38" stroke-width="0.1" text-anchor="middle" letter-spacing="-0.3">WP</text>
<circle cx="529.5" cy="190.8" r="2.9" fill="#292929"/>
<circle cx="529.5" cy="190.8" r="2.2" fill="#8a8a8a"/>
<circle cx="524.0" cy="208.5" r="7.6" fill="#0a0a0a"/>
<rect x="521.0" y="201.8" width="6.2" height="12.5" fill="#c8c0b8"/>
<rect x="521.0" y="201.8" width="6.2" height="4" fill="#d8e0ea"/>
<ellipse cx="524.2" cy="210.0" rx="2.4" ry="4" fill="#c09470"/>
<circle cx="529.5" cy="214.0" r="2.9" fill="#292929"/>
<circle cx="529.5" cy="214.0" r="2.2" fill="#c4314b"/>
<circle cx="524.0" cy="231.7" r="7.6" fill="#f4f4f4"/>
<path d="M520.2 226.9 q3.5 -2.5 7 0 v1.8 h-7z" fill="#2f8a3a"/>
<ellipse cx="523.7" cy="231.4" rx="3.8" ry="1.6" fill="#333"/>
<ellipse cx="523.7" cy="231.4" rx="1.8" ry="1" fill="#ddd"/>
<path d="M522.5 233.7 v3 M525.0 233.7 v3" stroke="#aaa" stroke-width="0.6"/>
<circle cx="529.5" cy="237.2" r="2.9" fill="#292929"/>
<circle cx="529.5" cy="237.2" r="2.2" fill="#c4314b"/>
<circle cx="524.0" cy="254.9" r="7.6" fill="#e07a7a"/>
<ellipse cx="523.5" cy="252.4" rx="5" ry="4" fill="#ec9090"/>
<path d="M519.0 257.7 q3 -1 6 0 q-3 2.5 -6 0z" fill="#6a1a1a"/>
<path d="M524.5 255.4 q2 -1.5 4 -0.5 l-1 2z" fill="#7a2020"/>
<circle cx="529.5" cy="260.4" r="2.9" fill="#292929"/>
<circle cx="529.5" cy="260.4" r="2.2" fill="#c4314b"/>
<circle cx="524.0" cy="278.1" r="7.6" fill="#f0dcc0"/>
<path d="M517.0 277.6 a7.6 7.6 0 0 1 12.5 -2.5 q-5 -3 -12 2z" fill="#c8461e"/>
<ellipse cx="521.0" cy="280.1" rx="1" ry="0.6" fill="#c07050"/><ellipse cx="526.0" cy="279.1" rx="1" ry="0.6" fill="#c07050"/>
<circle cx="529.5" cy="283.6" r="2.9" fill="#292929"/>
<circle cx="529.5" cy="283.6" r="2.2" fill="#c4314b"/>
<circle cx="524.0" cy="301.3" r="7.6" fill="#ecd5e8"/>
<text x="524.0" y="303.7" font-family="Liberation Sans" font-size="6.6" fill="#6a2c5e" stroke="#6a2c5e" stroke-width="0.1" text-anchor="middle" letter-spacing="-0.3">WP</text>
<circle cx="529.5" cy="306.7" r="2.9" fill="#292929"/>
<circle cx="529.5" cy="306.7" r="2.2" fill="#c4314b"/>
<circle cx="524.0" cy="324.4" r="7.6" fill="#ecd5e8"/>
<text x="524.0" y="326.8" font-family="Liberation Sans" font-size="6.6" fill="#6a2c5e" stroke="#6a2c5e" stroke-width="0.1" text-anchor="middle" letter-spacing="-0.3">WW</text>
<circle cx="529.5" cy="329.9" r="2.9" fill="#292929"/>
<circle cx="529.5" cy="329.9" r="2.2" fill="#c4314b"/>
<circle cx="524.0" cy="347.6" r="7.6" fill="#ecd5e8"/>
<text x="524.0" y="350.0" font-family="Liberation Sans" font-size="6.6" fill="#6a2c5e" stroke="#6a2c5e" stroke-width="0.1" text-anchor="middle" letter-spacing="-0.3">ZK</text>
<circle cx="529.5" cy="353.1" r="2.9" fill="#292929"/>
<circle cx="529.5" cy="353.1" r="2.2" fill="#c4314b"/>
<circle cx="524.0" cy="370.8" r="7.6" fill="#f5d8da"/>
<text x="524.0" y="373.2" font-family="Liberation Sans" font-size="6.6" fill="#9a3a48" stroke="#9a3a48" stroke-width="0.1" text-anchor="middle" letter-spacing="-0.3">ZG</text>
<circle cx="529.5" cy="376.3" r="2.9" fill="#292929"/>
<circle cx="529.5" cy="376.3" r="2.2" fill="#c4314b"/>
</svg>
<div class="abs t" style="left:535px;top:135.3px;font-size:6.4px;color:#f2f2f2;line-height:8px">Weronika Koselnik</div>
<div class="abs t" style="left:535px;top:158.5px;font-size:6.4px;color:#f2f2f2;line-height:8px">Weronika Muszyńska</div>
<div class="abs t" style="left:535px;top:181.7px;font-size:6.4px;color:#f2f2f2;line-height:8px">Weronika Pająk</div>
<div class="abs t" style="left:535px;top:204.8px;font-size:6.4px;color:#f2f2f2;line-height:8px">Weronika Siemieniec</div>
<div class="abs t" style="left:535px;top:228.0px;font-size:6.4px;color:#f2f2f2;line-height:8px">Wiktor Malinowski</div>
<div class="abs t" style="left:535px;top:251.2px;font-size:6.4px;color:#f2f2f2;line-height:8px">Wiktoria Cader</div>
<div class="abs t" style="left:535px;top:274.4px;font-size:6.4px;color:#f2f2f2;line-height:8px">Wiktoria Czajkowska</div>
<div class="abs t" style="left:535px;top:297.6px;font-size:6.4px;color:#f2f2f2;line-height:8px">Wiktoria Piętak</div>
<div class="abs t" style="left:535px;top:320.7px;font-size:6.4px;color:#f2f2f2;line-height:8px">Wiktoria Wichowska</div>
<div class="abs t" style="left:535px;top:343.9px;font-size:6.4px;color:#f2f2f2;line-height:8px">Zofia Kotusiewicz</div>
<div class="abs t" style="left:535px;top:367.1px;font-size:6.4px;color:#f2f2f2;line-height:8px">Zuzanna Gromek</div>

<!-- bottom strip -->
<div class="abs" id="strip"></div>
<div class="abs t" style="left:-1.4px;top:317.7px;font-size:7px;color:#e0e0e0;line-height:8px">ki</div>
<div class="abs" style="left:90px;top:338px;width:83px;height:42px;background:#3b3b3b"></div>
<div class="abs" style="left:174px;top:338px;width:82px;height:42px;background:#3b3b3b"></div>
<div class="abs" style="left:257px;top:338px;width:82px;height:42px;background:#3b3b3b"></div>
<div class="abs" style="left:340px;top:338px;width:82px;height:42px;background:#3b3b3b"></div>
<div class="abs" style="left:423px;top:338px;width:84px;height:42px;background:#4a4a4a"></div>
<svg class="abs" style="left:0;top:338px" width="507" height="42" viewBox="0 338 507 42">
<circle cx="-7" cy="359" r="10.5" fill="#6264a7"/>
<defs><filter id="bl" x="-20%" y="-20%" width="140%" height="140%"><feGaussianBlur stdDeviation="0.9"/></filter><clipPath id="c1"><circle cx="31.5" cy="359" r="10.5"/></clipPath><clipPath id="c2"><circle cx="298.2" cy="359" r="10.2"/></clipPath></defs>
<g clip-path="url(#c1)"><rect x="20" y="348" width="23" height="22" fill="#8a6a48"/><g filter="url(#bl)"><rect x="19" y="347" width="8" height="24" fill="#e8e0cc"/><rect x="20" y="347" width="24" height="5" fill="#c8b8a0"/><rect x="35" y="350" width="9" height="8" fill="#a86a30"/><circle cx="31" cy="355" r="3" fill="#c8a890"/><path d="M25 371 L26 360 Q31 357 37 360 L38 371Z" fill="#141c30"/><circle cx="33" cy="363" r="1.5" fill="#d8c0b0"/><rect x="37" y="358" width="6" height="6" fill="#6a5a50"/></g></g>
<g clip-path="url(#c2)"><rect x="287" y="348" width="23" height="22" fill="#8a9298"/><g filter="url(#bl)"><rect x="287" y="348" width="23" height="6" fill="#c8d0d8"/><rect x="303" y="350" width="8" height="8" fill="#e8ecf0"/><rect x="292" y="355" width="10" height="9" fill="#6a7278"/><path d="M300 362 L309 359 L309 366 Z" fill="#2a3a58"/><rect x="287" y="365" width="23" height="5" fill="#9a7a5a"/><rect x="287" y="352" width="4" height="12" fill="#d8dde0"/></g></g>
<circle cx="70.5" cy="359" r="10.5" fill="#f3d6d8"/><text x="70.5" y="362.3" font-family="Liberation Sans" font-size="9" font-weight="normal" stroke-width="0.15" fill="#a4505c" stroke="#a4505c" text-anchor="middle">ZG</text>
<circle cx="131.5" cy="358.5" r="10" fill="#cfe5d5"/><text x="131.5" y="361.8" font-family="Liberation Sans" font-size="9" font-weight="normal" stroke-width="0.15" fill="#3f7252" stroke="#3f7252" text-anchor="middle">PP</text>
<circle cx="214.5" cy="358.5" r="10" fill="#e2e8cf"/><text x="214.5" y="361.8" font-family="Liberation Sans" font-size="9" font-weight="normal" stroke-width="0.15" fill="#56713a" stroke="#56713a" text-anchor="middle">OK</text>
<circle cx="381" cy="358.5" r="10" fill="#f5d6cc"/><text x="381" y="361.8" font-family="Liberation Sans" font-size="9" font-weight="normal" stroke-width="0.15" fill="#a0503a" stroke="#a0503a" text-anchor="middle">OS</text>
<circle cx="465" cy="359.5" r="10" fill="#c9d7ea"/><text x="465" y="362.8" font-family="Liberation Sans" font-size="9" font-weight="normal" stroke-width="0.2" fill="#2f4c7c" stroke="#2f4c7c" text-anchor="middle">HS</text>
<rect x="153.4" y="372.5" width="2.2" height="4.5" rx="1.1" fill="#e0e0e0"/><path d="M151.8 372.5 L156.6 378.5" stroke="#3b3b3b" stroke-width="0.9"/><path d="M151.4 372 L156.6 378.5" stroke="#d0d0d0" stroke-width="0.6"/><path d="M154.5 377.5 v1.5" stroke="#ccc" stroke-width="0.6"/>
<rect x="229.9" y="372.5" width="2.2" height="4.5" rx="1.1" fill="#e0e0e0"/><path d="M228.3 372.5 L233.1 378.5" stroke="#3b3b3b" stroke-width="0.9"/><path d="M227.9 372 L233.1 378.5" stroke="#d0d0d0" stroke-width="0.6"/><path d="M231.0 377.5 v1.5" stroke="#ccc" stroke-width="0.6"/>
<rect x="301.9" y="372.5" width="2.2" height="4.5" rx="1.1" fill="#e0e0e0"/><path d="M300.3 372.5 L305.1 378.5" stroke="#3b3b3b" stroke-width="0.9"/><path d="M299.9 372 L305.1 378.5" stroke="#d0d0d0" stroke-width="0.6"/><path d="M303.0 377.5 v1.5" stroke="#ccc" stroke-width="0.6"/>
<rect x="392.4" y="372.5" width="2.2" height="4.5" rx="1.1" fill="#e0e0e0"/><path d="M390.8 372.5 L395.6 378.5" stroke="#3b3b3b" stroke-width="0.9"/><path d="M390.4 372 L395.6 378.5" stroke="#d0d0d0" stroke-width="0.6"/><path d="M393.5 377.5 v1.5" stroke="#ccc" stroke-width="0.6"/>
</svg>
<div class="abs t" style="left:96.9px;top:372px;font-size:5.4px;color:#e0e0e0;line-height:7px">Patrycja Pogorzelska</div>
<div class="abs t" style="left:180.0px;top:372px;font-size:5.4px;color:#e0e0e0;line-height:7px">Oliwia Koprowska</div>
<div class="abs t" style="left:263.7px;top:372px;font-size:5.4px;color:#e0e0e0;line-height:7px">Oskar Warso</div>
<div class="abs t" style="left:347.0px;top:372px;font-size:5.4px;color:#e0e0e0;line-height:7px">Oliwia Szydełko</div>

<!-- taskbar -->
<div class="abs" id="taskbar"></div>
<div class="abs" style="left:0;top:381px;width:125px;height:19px;background:#f0f0f0"></div>
<div class="abs t" style="left:0px;top:386.2px;font-size:7px;color:#333;line-height:9px">z tu wyszukiwane słowa</div>
<svg class="abs" style="left:125px;top:380px" width="475" height="20" viewBox="125 380 475 20">
<circle cx="136.6" cy="390.6" r="3.2" stroke="#eee" stroke-width="1" fill="none"/>
<path d="M156 388.5 h4 M156 392.5 h4 M162 387 v7" stroke="#ddd" stroke-width="0.9"/>
<rect x="173.5" y="386" width="0.6" height="9" fill="#556"/>
<g transform="translate(0 1)">
<path d="M185 388.5 l5.5 -3.5 l5.5 3.5 v6.5 h-11z" fill="#1f8ee0"/><path d="M185 388.5 l5.5 4 l5.5 -4" fill="#8fd0f8"/>
<rect x="208" y="386" width="10" height="8" fill="#f5c54a"/><rect x="208" y="386" width="4.5" height="1.6" fill="#e6a82a"/><rect x="210" y="390.5" width="6" height="3" fill="#3a8ad8"/>
<rect x="232" y="385.5" width="8" height="9" fill="#1f8a4c"/><rect x="229.5" y="387" width="5.5" height="6" fill="#107c41"/><text x="232.2" y="392.3" font-family="Liberation Sans" font-size="5" font-weight="bold" fill="#fff" text-anchor="middle">x</text>
<circle cx="259" cy="390" r="5" fill="#db4437"/><path d="M259 390 L263.3 392.5 A5 5 0 0 1 254.7 392.5 Z" fill="#0f9d58"/><path d="M259 390 L254.7 392.5 A5 5 0 0 1 259 385 Z" fill="#0f9d58"/><path d="M259 390 L263.3 392.5 A5 5 0 0 1 256 394 Z" fill="#f4b400"/><circle cx="259" cy="390" r="2.3" fill="#fff"/><circle cx="259" cy="390" r="1.7" fill="#4285f4"/>
<circle cx="281.5" cy="390" r="5" fill="#1a9ad8"/><path d="M277 391 q2 -4 6 -2.5 q2 1 0.5 2.5 q-3 0.5 -4 2 q2 2.5 6 1 q-3 3.5 -7 1 q-2 -1.5 -1.5 -4z" fill="#2ac870"/><circle cx="282" cy="390.5" r="1.6" fill="#1c2a36"/>
<rect x="302" y="385.5" width="8" height="9" fill="#2b6cd4"/><rect x="299.5" y="387" width="5.5" height="6" fill="#185abd"/><text x="302.2" y="392" font-family="Liberation Sans" font-size="4.5" font-weight="bold" fill="#fff" text-anchor="middle">w</text>
<rect x="316" y="379" width="23" height="20" fill="#3a4856"/>
<circle cx="330" cy="387" r="1.6" fill="#7b83eb"/><rect x="323" y="386.5" width="8" height="7" fill="#5059c9"/><rect x="328" y="388" width="5" height="5" rx="1" fill="#7b83eb"/><circle cx="332" cy="393" r="2.2" fill="#d13438"/>
</g>
<rect x="206" y="398.5" width="16" height="1.5" fill="#8ec8f2"/>
<rect x="250" y="398.5" width="18" height="1.5" fill="#8ec8f2"/>
<rect x="296" y="398.5" width="17" height="1.5" fill="#8ec8f2"/>
<rect x="316" y="398.5" width="23" height="1.5" fill="#8ec8f2"/>
<rect x="528" y="385.6" width="24.5" height="11.4" fill="#1a64bc"/><rect x="550" y="385.6" width="3" height="11.4" rx="1.2" fill="#0a0a0a"/><rect x="528" y="385.6" width="1" height="11.4" fill="#f0f0f0"/>
<text x="540.8" y="393.6" font-family="Liberation Sans" font-size="6.4" fill="#fff" text-anchor="middle" letter-spacing="-0.3">0:05</text>
<path d="M558.5 392.5 l2.5 -2.5 l2.5 2.5" stroke="#ddd" stroke-width="0.8" fill="none"/>
<circle cx="571.6" cy="391" r="3.4" fill="#e0c818"/><path d="M568.4 391 L571.6 389 L574.8 391 L571.6 393.4Z" fill="#2f9a2f"/>
<rect x="578" y="388" width="6" height="5" fill="#eee"/><rect x="577" y="387" width="2" height="2" fill="#eee"/>
<path d="M590 389.5 h1.5 l2 -2 v7 l-2 -2 h-1.5z" fill="#ddd"/><path d="M595 388.5 q1.5 2 0 4 M596.5 387.5 q2.5 3 0 6" stroke="#ddd" stroke-width="0.6" fill="none"/>
</svg>
</body></html>
